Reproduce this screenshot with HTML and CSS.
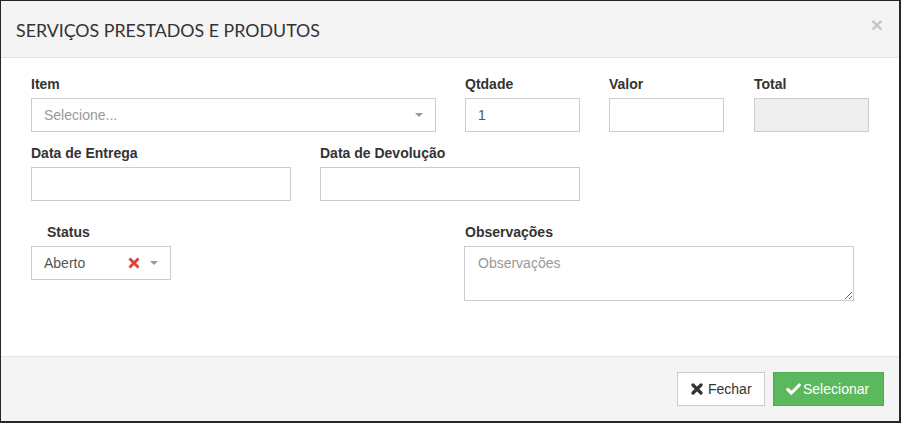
FILE: index.html
```html
<!DOCTYPE html>
<html lang="pt">
<head>
<meta charset="utf-8">
<title>Serviços Prestados e Produtos</title>
<link rel="stylesheet" href="styles.css">
</head>
<body>
<div class="modal">
  <div class="modal-header">
    <h4 class="modal-title">SERVIÇOS PRESTADOS E PRODUTOS</h4>
    <span class="close">×</span>
  </div>
  <div class="modal-body">
    <div class="row row-1">
      <div class="field f-item">
        <label>Item</label>
        <div class="control select">
          <span class="placeholder">Selecione...</span>
          <span class="caret"></span>
        </div>
      </div>
      <div class="field f-small">
        <label>Qtdade</label>
        <div class="control"><span class="value">1</span></div>
      </div>
      <div class="field f-small">
        <label>Valor</label>
        <div class="control"></div>
      </div>
      <div class="field f-small f-total">
        <label>Total</label>
        <div class="control disabled"></div>
      </div>
    </div>
    <div class="row row-2">
      <div class="field f-date">
        <label>Data de Entrega</label>
        <div class="control"></div>
      </div>
      <div class="field f-date">
        <label>Data de Devolução</label>
        <div class="control"></div>
      </div>
    </div>
    <div class="row row-3">
      <div class="field f-status">
        <label class="indent">Status</label>
        <div class="control select">
          <span class="value">Aberto</span>
          <span class="clear">
            <svg width="12" height="12" viewBox="0 0 12 12"><path d="M1.5 1.5 L10.5 10.5 M10.5 1.5 L1.5 10.5" stroke="#e0403f" stroke-width="3" stroke-linecap="butt"/></svg>
          </span>
          <span class="caret"></span>
        </div>
      </div>
      <div class="field f-obs">
        <label>Observações</label>
        <textarea class="textarea" placeholder="Observações"></textarea>
      </div>
    </div>
  </div>
  <div class="modal-footer">
    <button class="btn btn-default">
      <svg class="ico" width="12" height="12" viewBox="0 0 12 12"><path d="M2 2 L10 10 M10 2 L2 10" stroke="#333" stroke-width="3.2" stroke-linecap="round"/></svg>
      Fechar
    </button>
    <button class="btn btn-success">
      <svg class="ico" width="15" height="12" viewBox="0 0 15 12"><path d="M1.8 6.5 L5.5 10 L13.3 2" stroke="#fff" stroke-width="3.2" fill="none" stroke-linecap="round" stroke-linejoin="round"/></svg>
      Selecionar
    </button>
  </div>
</div>
</body>
</html>
```

FILE: styles.css
```css
* { box-sizing: border-box; }
html, body { margin: 0; padding: 0; }
body {
  background: #262626;
  width: 901px;
  height: 423px;
  overflow: hidden;
  font-family: "Liberation Sans", Arial, sans-serif;
  color: #333;
}
.modal {
  margin: 1px 0 0 1px;
  width: 898px;
  height: 420px;
  background: #fff;
  display: flex;
  flex-direction: column;
}
.modal-header {
  height: 57px;
  background: #f4f4f4;
  border-bottom: 1px solid #e3e3e3;
  display: flex;
  align-items: center;
  justify-content: space-between;
  padding: 0 16px 0 15px;
}
.modal-title {
  margin: 0;
  font-family: Lato, "Liberation Sans", sans-serif;
  font-weight: 400;
  font-size: 17.8px;
  color: #333;
  position: relative;
  top: 1px;
}
.close {
  font-family: "Liberation Sans", Arial, sans-serif;
  font-size: 21px;
  font-weight: bold;
  color: #c6c6c6;
  line-height: 1;
  position: relative;
  top: -5px;
}
.modal-body {
  flex: 1;
  padding: 17px 0 0 30px;
}
.row { display: flex; }
.row-1 { gap: 29px; }
.row-2 { gap: 29px; margin-top: 12px; }
.row-3 { margin-top: 22px; }
.field label {
  display: block;
  font-size: 14px;
  font-weight: bold;
  line-height: 18px;
  height: 18px;
  margin-bottom: 5px;
  color: #333;
}
.field label.indent { padding-left: 16px; }
.f-item { width: 405px; }
.f-small { width: 115px; }
.f-total { margin-left: 1px; }
.f-date { width: 260px; }
.f-status { width: 140px; }
.f-obs { width: 390px; margin-left: 293px; }
.f-obs label { padding-left: 1px; }
.control {
  height: 34px;
  border: 1px solid #ccc;
  background: #fff;
  display: flex;
  align-items: center;
  padding: 0 12px;
  font-size: 14px;
  color: #555;
}
.control.disabled { background: #eee; }
.control .placeholder { color: #999; flex: 1; }
.control .value { flex: 1; }
.caret {
  width: 0;
  height: 0;
  border-left: 4px solid transparent;
  border-right: 4px solid transparent;
  border-top: 4px solid #999;
  margin-left: 4px;
}
.select { padding-right: 12px; }
.clear {
  display: flex;
  align-items: center;
  margin-right: 6px;
}
.textarea {
  display: block;
  width: 390px;
  height: 55px;
  margin: 0;
  border: 1px solid #ccc;
  padding: 8px 13px;
  font-family: "Liberation Sans", Arial, sans-serif;
  font-size: 14px;
  color: #555;
  resize: both;
  outline: none;
}
.textarea::placeholder { color: #999; }
.modal-footer {
  height: 65px;
  background: #f4f4f4;
  border-top: 1px solid #e3e3e3;
  display: flex;
  justify-content: flex-end;
  align-items: flex-start;
  gap: 8px;
  padding: 15px 15px 0 0;
}
.btn {
  height: 34px;
  display: flex;
  align-items: center;
  gap: 5px;
  font-family: "Liberation Sans", Arial, sans-serif;
  font-size: 14px;
  padding: 0 12px;
  border: 1px solid #ccc;
  border-radius: 0;
  cursor: pointer;
}
.btn-default { background: #fff; color: #333; width: 88px; padding-left: 13px; }
.btn-success {
  background: #5cb85c;
  border-color: #4cae4c;
  color: #fff;
  width: 111px;
  gap: 2px;
}
.ico { flex: none; }
```
